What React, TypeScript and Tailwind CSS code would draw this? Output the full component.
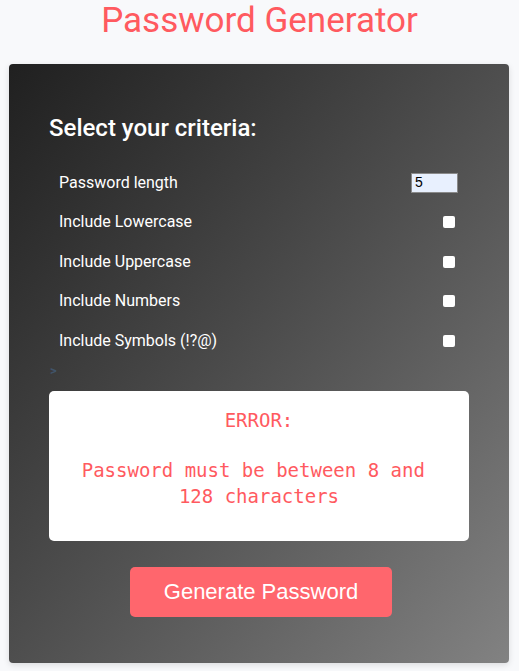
import React from "react";

const rows = [
  "Include Lowercase",
  "Include Uppercase",
  "Include Numbers",
  "Include Symbols (!?@)",
];

export default function App() {
  return (
    <div className="min-h-[671px] w-full bg-[#f8f9fb] font-['Roboto',sans-serif]">
      <h1 className="h-[42px] text-center text-[35px] leading-[42px] font-normal text-[#ff5a5f]">
        Password Generator
      </h1>
      <div className="ml-[9px] mr-[10px] mt-[22px] rounded-[4px] bg-gradient-to-br from-[#202020] to-[#828282] px-[40px] pt-[50px] pb-[46px] shadow-[0_2px_6px_rgba(0,0,0,0.12)]">
        <h2 className="text-[24px] leading-[28px] font-medium text-white">
          Select your criteria:
        </h2>
        <div className="mt-[21px] pl-[10px] pr-[11px]">
          <div className="flex h-[39.5px] items-center justify-between">
            <span className="text-[16px] text-white">Password length</span>
            <div className="flex h-[20px] w-[47px] items-center border border-[#8a8a8a] bg-[#e8f0fe] pl-[3px] font-['Liberation_Sans',sans-serif] text-[14px] text-black">
              5
            </div>
          </div>
          {rows.map((r) => (
            <div key={r} className="flex h-[39.5px] items-center justify-between">
              <span className="text-[16px] text-white">{r}</span>
              <div className="mr-[3px] h-[12px] w-[12px] rounded-[2px] bg-white" />
            </div>
          ))}
        </div>
        <div className="ml-[1px] h-[30px] pt-[3px] text-[13px] leading-[14px] font-bold text-[#4a7ab0] opacity-40">&gt;</div>
        <div className="flex h-[150px] flex-col items-center rounded-[5px] bg-white px-[20px] pt-[16px] text-center font-['DejaVu_Sans_Mono',monospace] text-[19px] leading-[26px] text-[#ff5a5f]">
          <div>ERROR:</div>
          <div className="mt-[24px] whitespace-pre">{"Password must be between 8 and \n128 characters"}</div>
        </div>
        <div className="mt-[26px] flex justify-center pl-[4px]">
          <button className="h-[50px] w-[262px] rounded-[5px] bg-[#ff666d] font-['Liberation_Sans',sans-serif] text-[22px] text-white">
            Generate Password
          </button>
        </div>
      </div>
    </div>
  );
}
